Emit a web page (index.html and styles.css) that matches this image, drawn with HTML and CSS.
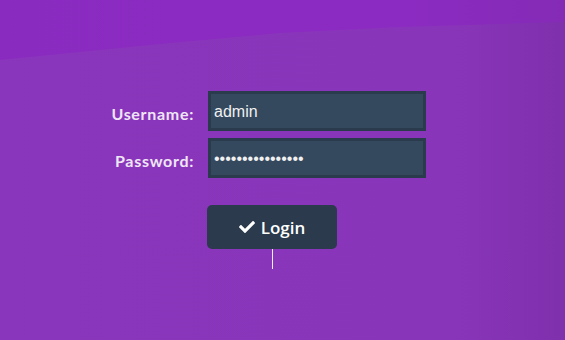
FILE: index.html
```html
<!DOCTYPE html>
<html lang="en">
<head>
  <meta charset="UTF-8">
  <title>Login</title>
  <link rel="stylesheet" href="styles.css">
</head>
<body>
  <div class="wave"></div>
  <div class="container">
    <form class="login-form" onsubmit="return false">
      <label for="username">Username:</label>
      <input type="text" id="username" value="admin">

      <label for="password">Password:</label>
      <input type="password" id="password" value="1234567890123456">

      <div class="actions">
        <button type="submit">
          <svg class="icon" viewBox="0 0 512 512" width="16" height="16" aria-hidden="true">
            <path fill="currentColor" d="M173.9 439.4l-166.4-166.4c-10-10-10-26.2 0-36.2l36.2-36.2c10-10 26.2-10 36.2 0L192 312.7 432.1 72.6c10-10 26.2-10 36.2 0l36.2 36.2c10 10 10 26.2 0 36.2L210.1 439.4c-10 10-26.2 10-36.2 0z"/>
          </svg>
          Login
        </button>
        <div class="stem"></div>
      </div>
    </form>
  </div>
</body>
</html>
```

FILE: styles.css
```css
body {
  margin: 0;
  height: 340px;
  overflow: hidden;
  font-family: 'Lato', 'Open Sans', sans-serif;
  background: linear-gradient(to right, #8a36bc 0%, #8935ba 80%, #7f30ac 100%);
  position: relative;
}

.wave {
  position: absolute;
  left: 0;
  top: 0;
  width: 565px;
  height: 62px;
  background: linear-gradient(to right, #8a2bc0, #8c2bc2 70%, #842bb6);
  clip-path: polygon(0 60px, 80px 52px, 160px 44px, 280px 33px, 400px 27px, 565px 22px, 565px 0, 0 0);
}

.container {
  position: relative;
  padding: 91px 0 0 104px;
}

.login-form {
  display: grid;
  grid-template-columns: 90px 218px;
  column-gap: 14px;
  row-gap: 7px;
  align-items: center;
}

label {
  text-align: right;
  font-weight: bold;
  font-size: 16px;
  letter-spacing: 0.7px;
  color: #efe6f5;
  padding-top: 5px;
}

input {
  box-sizing: border-box;
  width: 218px;
  height: 40px;
  margin: 0;
  padding: 2px 3px 0;
  border: 3px solid #2a3b4d;
  background: #34495e;
  color: #f1f1f1;
  font-family: 'Liberation Sans', Arial, sans-serif;
  font-size: 16px;
  outline: none;
}

.actions {
  grid-column: 2;
  margin-top: 20px;
  margin-left: -1px;
  width: 130px;
  display: flex;
  flex-direction: column;
  align-items: center;
}

button {
  width: 130px;
  height: 44px;
  border: none;
  border-radius: 5px;
  background: #2b3a4c;
  color: #ffffff;
  font-family: 'Open Sans', sans-serif;
  font-size: 17px;
  font-weight: 600;
  display: flex;
  align-items: center;
  justify-content: center;
  gap: 6px;
  cursor: pointer;
}

.icon {
  width: 16px;
  height: 16px;
}

.stem {
  width: 1px;
  height: 20px;
  background: #f4eefa;
}
```
